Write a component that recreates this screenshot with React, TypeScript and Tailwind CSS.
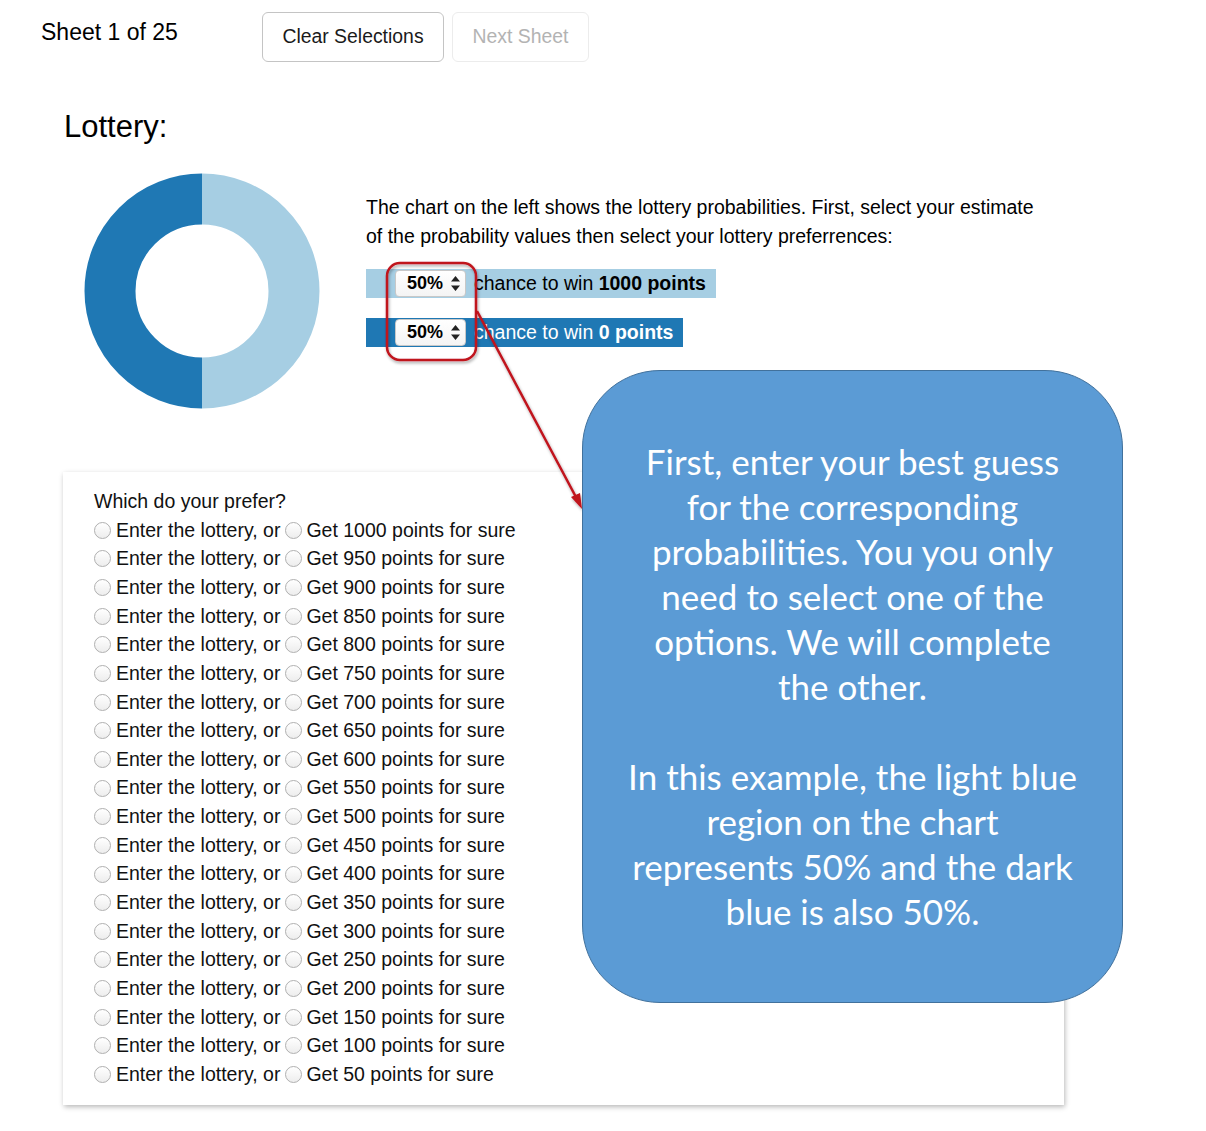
import React from "react";

const amounts = [1000, 950, 900, 850, 800, 750, 700, 650, 600, 550, 500, 450, 400, 350, 300, 250, 200, 150, 100, 50];

// Mac-style empty radio button
const Radio = () => (
  <span className="inline-block w-[17px] h-[17px] shrink-0 rounded-full border border-[#b0b0b0] bg-gradient-to-b from-white to-[#ededed]" />
);

// Small select box showing the chosen percentage
const PercentSelect = () => (
  <span className="flex items-center justify-between w-[71px] h-[27px] pl-[11px] pr-[5px] bg-gradient-to-b from-white to-[#f4f4f4] rounded-[4px] border border-[#c8c8c8] text-black font-bold text-[18px]">
    50%
    <svg viewBox="0 0 9 15" className="w-[9px] h-[15px]">
      <path d="M4.5 0 L9 5.5 L0 5.5 Z M4.5 15 L9 9.5 L0 9.5 Z" fill="#222" />
    </svg>
  </span>
);

const Donut = () => (
  <svg width="236" height="236" viewBox="0 0 236 236">
    {/* right half - light */}
    <path d="M118 26 A92 92 0 0 1 118 210" fill="none" stroke="#a6cee3" strokeWidth={51} />
    {/* left half - dark */}
    <path d="M118 210 A92 92 0 0 1 118 26" fill="none" stroke="#1f78b4" strokeWidth={51} />
  </svg>
);

export default function App() {
  return (
    <div className="relative w-[1206px] h-[1131px] bg-white text-black font-['Liberation_Sans',Arial,sans-serif] overflow-hidden">
      {/* Header */}
      <div className="flex items-start pt-3 pl-[41px]">
        <div className="w-[221px] pt-[3px] text-[23px]">Sheet 1 of 25</div>
        <div className="flex gap-2">
          <button className="w-[182px] h-[50px] rounded-md border border-[#c4c4c4] text-[19.4px] text-[#1a1a1a]">
            Clear Selections
          </button>
          <button className="w-[137px] h-[50px] rounded-md border border-[#ececec] text-[19.4px] text-[#b3b3b3]">
            Next Sheet
          </button>
        </div>
      </div>

      <h1 className="pl-[64px] mt-[47px] text-[31px] leading-[36px]">Lottery:</h1>

      {/* Chart + estimate */}
      <div className="flex mt-[28px]">
        <div className="ml-[84px] w-[282px]">
          <Donut />
        </div>
        <div className="pt-[20px]">
          <p className="text-[19.5px] leading-[29px] whitespace-nowrap">
            The chart on the left shows the lottery probabilities. First, select your estimate
            <br />
            of the probability values then select your lottery preferrences:
          </p>
          <div className="mt-[18px] flex flex-col items-start gap-5">
            <div className="flex items-center gap-2 w-[350px] h-[29px] pl-[29px] bg-[#a6cee3] text-[19.5px] text-black">
              <PercentSelect />
              <span className="whitespace-nowrap">
                chance to win <b>1000 points</b>
              </span>
            </div>
            <div className="flex items-center gap-2 w-[317px] h-[29px] pl-[29px] bg-[#1f78b4] text-[19.5px] text-white">
              <PercentSelect />
              <span className="whitespace-nowrap">
                chance to win <b>0 points</b>
              </span>
            </div>
          </div>
        </div>
      </div>

      {/* Preference card */}
      <div className="ml-[63px] mt-[63px] w-[1001px] bg-white pl-[31px] pt-[15px] pb-[16px] shadow-[1px_2px_5px_rgba(0,0,0,0.28)] text-[19.5px] text-[#111]">
        <div className="h-[29px] leading-[29px]">Which do your prefer?</div>
        {amounts.map((a) => (
          <div key={a} className="flex items-center h-[28.65px] whitespace-nowrap">
            <Radio />
            <span className="ml-[5px]">Enter the lottery, or</span>
            <span className="ml-[5px] flex">
              <Radio />
            </span>
            <span className="ml-[4px]">Get {a} points for sure</span>
          </div>
        ))}
      </div>

      {/* Annotation: red highlight and arrow */}
      <svg className="absolute left-0 top-0 pointer-events-none" width="1206" height="1131">
        <defs>
          <filter id="sh" x="-20%" y="-20%" width="140%" height="140%">
            <feDropShadow dx="1" dy="2" stdDeviation="1.5" floodColor="#000" floodOpacity="0.35" />
          </filter>
        </defs>
        <g filter="url(#sh)">
          <rect x="387" y="263" width="89" height="97" rx="13" fill="none" stroke="#c0121c" strokeWidth="2.5" />
          <line x1="477" y1="311" x2="577" y2="499" stroke="#c0121c" strokeWidth="2.5" />
          <path d="M582 509 L571 497 L580 493 Z" fill="#c0121c" />
        </g>
      </svg>

      {/* Callout */}
      <div className="absolute left-[582px] top-[370px] w-[541px] h-[633px] rounded-[78px] bg-[#5b9bd5] border-[1.5px] border-[#41719c] flex items-center justify-center text-center text-white text-[35px] leading-[45px] font-['Lato','Open_Sans',sans-serif]">
        <p>
          First, enter your best guess
          <br />
          for the corresponding
          <br />
          probabilities. You you only
          <br />
          need to select one of the
          <br />
          options. We will complete
          <br />
          the other.
          <br />
          <br />
          In this example, the light blue
          <br />
          region on the chart
          <br />
          represents 50% and the dark
          <br />
          blue is also 50%.
        </p>
      </div>
    </div>
  );
}
